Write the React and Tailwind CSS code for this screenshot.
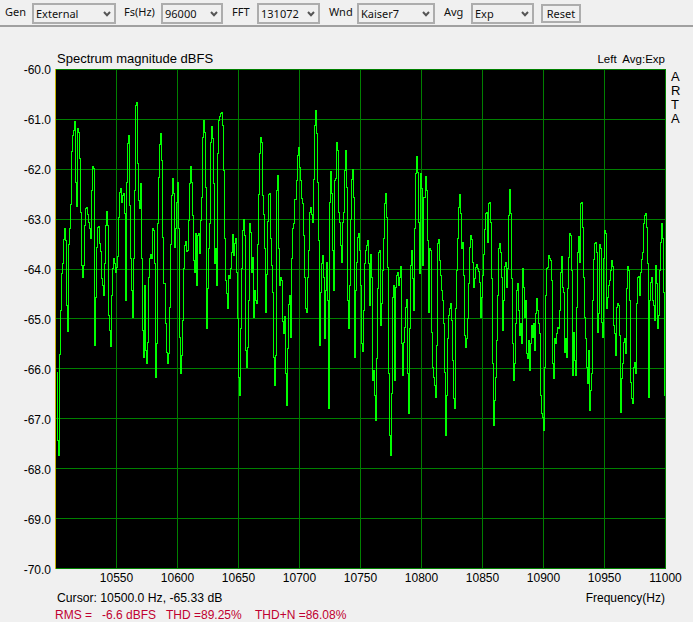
const TRACE = [
  [56, [372,440,455,354,310,273,263,239,228,240,305,331,244,228]],
  [70, [204,151,135,130,121,182,206,128,132,158,212,265,277,265,225,208,207,214,222,228,238,190,166,168,345,297,247,227,226,243,251,278,285]],
  [103, [295,263,225,211,225,315,330,346,295,268,258,263,272,267,256,217,192,188,202,195,193,213,300,182,143,135,205,258,290,317,258,190,105,102,163,200,208,183,258,330,357,285,350,363,342,277,258,254,258,228,230,263,377,343,223,177,144,133,160,237,283,283,323,352,363,353,307,244,195,178,193,247,228,202,182,228,337,373,355,320,268,245,241,251,250,220,183,166,182,215,260,272,233,285,235,233,253,220,197,137,120,132,187,328,288,248,223,142,126,138,183,263,248,285,153,120,116,113,112,125,170,238,280,293,308,275,278,268,252,234,255,243,238,272,318,377,395,328,268,230,219,235,350,367,347,300,223,232,272,257,317,290,300]],
  [256, [303,244,194,153,137,142,195,214,248,312,274,221,194,193,238,265,292,357,385,355,190,175,248,285,277,280,321,333,316,373,405,348,304,295,337,258,228,223,199,199,180,155,147,167,180,198,203,235,277,308,312,277,250,212,207,214,222,179,125,110,133,182,240,345,292,263,255,277,338,290,262,300,408,202,171,193,250,290,180,178,142,150,212,222,245,262,222,212,170,150,187,300,328,285,219,179,169,197,357,290,262,237,233,250,285,343,351,310,263,250,245,240,263,305,254,277,380,370,395,420,358,288,252,250,325,303,270,238,203,193,217,267,373,435,455,393,297,285,380,287,275,272,285,277,266,343,375,342,327,307,299,373,413,328,265,250,278,310,228,173,156,172,222,273,173,188,265,197,197,176,190,240,312,248,250,332,367,377,385,397,345,243,239,260,275,290,300,323,372,435,395,338,315,308,303,320,360,398,408,308,270,238,207,194,213]],
  [461, [248,242,275,335,347,338,318,283,247,235,239,262,287,278,267,264,268,271,282,317,297,275,254,229,213,212,242,203,202,222,278,363,425,400,377,340,295,248,243,252,277,330,300,266,262,287,268,215,189,213,278,343,380,363,323,290,283,310,335,323,343,268,287,317,300,353,358,340,370,343,325,337,323,350,313,298,310,323,333,395,413,417,430,367,295,268,267,255,258,260,280,363,378,338,343,333,327,328,310,272,256,287,292,352,338,357,288,257,233,235,270,375,332,360,375,307,252,236,262,203,202,227,277,317,338,367,383,350,410,390,373,300,259,243,242,252,332,313,244,248,322,337,258,230,233,308,297,285,280,270,260,266,325,333,355,307,303,305,335,412,378,363,342,338,353,288,266,270,300,382,398,403,367,362,373,303,277,276,295,272,259,252,223,215,213,227,263,397,300,282,277,300,305,320,265,283,328,315,270,242,223,238,292,395,340]],
]

function tracePath() {
  let d = ''
  TRACE.forEach(([start, ys]) => {
    ys.forEach((y, i) => {
      const x = start + i + 0.5
      d += d ? `H${x}V${y}` : `M${x} ${y}`
    })
  })
  return d
}

const GRID_X = [116, 177, 238, 299, 360, 421, 482, 543, 604]
const GRID_Y = [119, 169, 219, 269, 318, 368, 418, 468, 518]
const Y_LABELS = ['-60.0', '-61.0', '-62.0', '-63.0', '-64.0', '-65.0', '-66.0', '-67.0', '-68.0', '-69.0', '-70.0']
const X_LABELS = [10550, 10600, 10650, 10700, 10750, 10800, 10850, 10900, 10950, 11000]

function Select({ value, width }) {
  return (
    <div className={`flex h-[21px] items-center justify-between border-2 border-[#adadad] bg-[#f0f0f0] pl-[2px] pr-[3px] ${width}`}>
      <span>{value}</span>
      <svg width="8" height="6" viewBox="0 0 8 6">
        <path d="M1 1L4 4.2L7 1" fill="none" stroke="#555" strokeWidth="2" />
      </svg>
    </div>
  )
}

function Toolbar() {
  return (
    <div className="flex h-[27px] shrink-0 items-start border-b-2 border-[#a0a0a0] pt-[3px] font-['Noto_Sans',sans-serif] text-[11px] leading-[16px] text-[#111]">
      <span className="ml-[5px] w-[27px] pt-[1px]">Gen</span>
      <Select value="External" width="w-[84px]" />
      <span className="ml-[8px] w-[37px] pt-[1px]">Fs(Hz)</span>
      <Select value="96000" width="w-[62px]" />
      <span className="ml-[9px] w-[25px] pt-[1px]">FFT</span>
      <Select value="131072" width="w-[63px]" />
      <span className="ml-[9px] w-[28px] pt-[1px]">Wnd</span>
      <Select value="Kaiser7" width="w-[78px]" />
      <span className="ml-[9px] w-[27px] pt-[1px]">Avg</span>
      <Select value="Exp" width="w-[63px]" />
      <button className="ml-[7px] mt-[1px] h-[19px] w-[40px] border-2 border-[#adadad] bg-[#f0f0f0] text-center leading-[14px]">Reset</button>
    </div>
  )
}

function Plot() {
  return (
    <svg width="611" height="500" viewBox="55 69 611 500" className="block shrink-0" shapeRendering="crispEdges">
      <rect x="55" y="69" width="611" height="500" fill="#000" />
      {GRID_X.map(x => <path key={x} d={`M${x + 0.5} 69V569`} stroke="#008000" />)}
      {GRID_Y.map(y => <path key={y} d={`M55 ${y + 0.5}H666`} stroke="#008000" />)}
      <path d={tracePath()} fill="none" stroke="#00ff00" />
      <path d="M55 69.5H666M55 568.5H666M665.5 69V569" stroke="#008000" fill="none" />
      <path d="M55.5 69V569" stroke="#c8b400" />
    </svg>
  )
}

export default function App() {
  return (
    <div className="flex h-[622px] w-[693px] flex-col overflow-hidden bg-[#f0f0f0] font-['Liberation_Sans',Arial,sans-serif] text-[12px] leading-[14px] text-black">
      <Toolbar />

      <div className="mt-[25px] flex h-[17px] items-start justify-between pl-[57px] pr-[28px]">
        <span className="text-[13px]">Spectrum magnitude dBFS</span>
        <span className="whitespace-pre text-[11.5px]">Left  Avg:Exp</span>
      </div>

      <div className="flex">
        <div className="-mt-[6px] -mb-[8px] flex h-[514px] w-[55px] flex-col justify-between pr-[4px] text-right">
          {Y_LABELS.map(l => <span key={l}>{l}</span>)}
        </div>
        <Plot />
        <div className="ml-[5px] flex flex-col pt-[1px] text-[13px] leading-[14px]">
          {['A', 'R', 'T', 'A'].map((c, i) => <span key={i}>{c}</span>)}
        </div>
      </div>

      <div className="flex pl-[86px] pt-[2px]">
        {X_LABELS.map(l => <span key={l} className="w-[61px] shrink-0 text-center">{l}</span>)}
      </div>

      <div className="mt-[6px] flex justify-between pl-[57px] pr-[28px]">
        <span className="text-[12.2px]">Cursor: 10500.0 Hz, -65.33 dB</span>
        <span>Frequency(Hz)</span>
      </div>

      <div className="mt-[3px] flex whitespace-pre pl-[55px] text-[#c00030]">
        <span className="w-[111px] shrink-0">RMS =   -6.6 dBFS</span>
        <span className="w-[89px] shrink-0">THD =89.25%</span>
        <span>THD+N =86.08%</span>
      </div>
    </div>
  )
}
